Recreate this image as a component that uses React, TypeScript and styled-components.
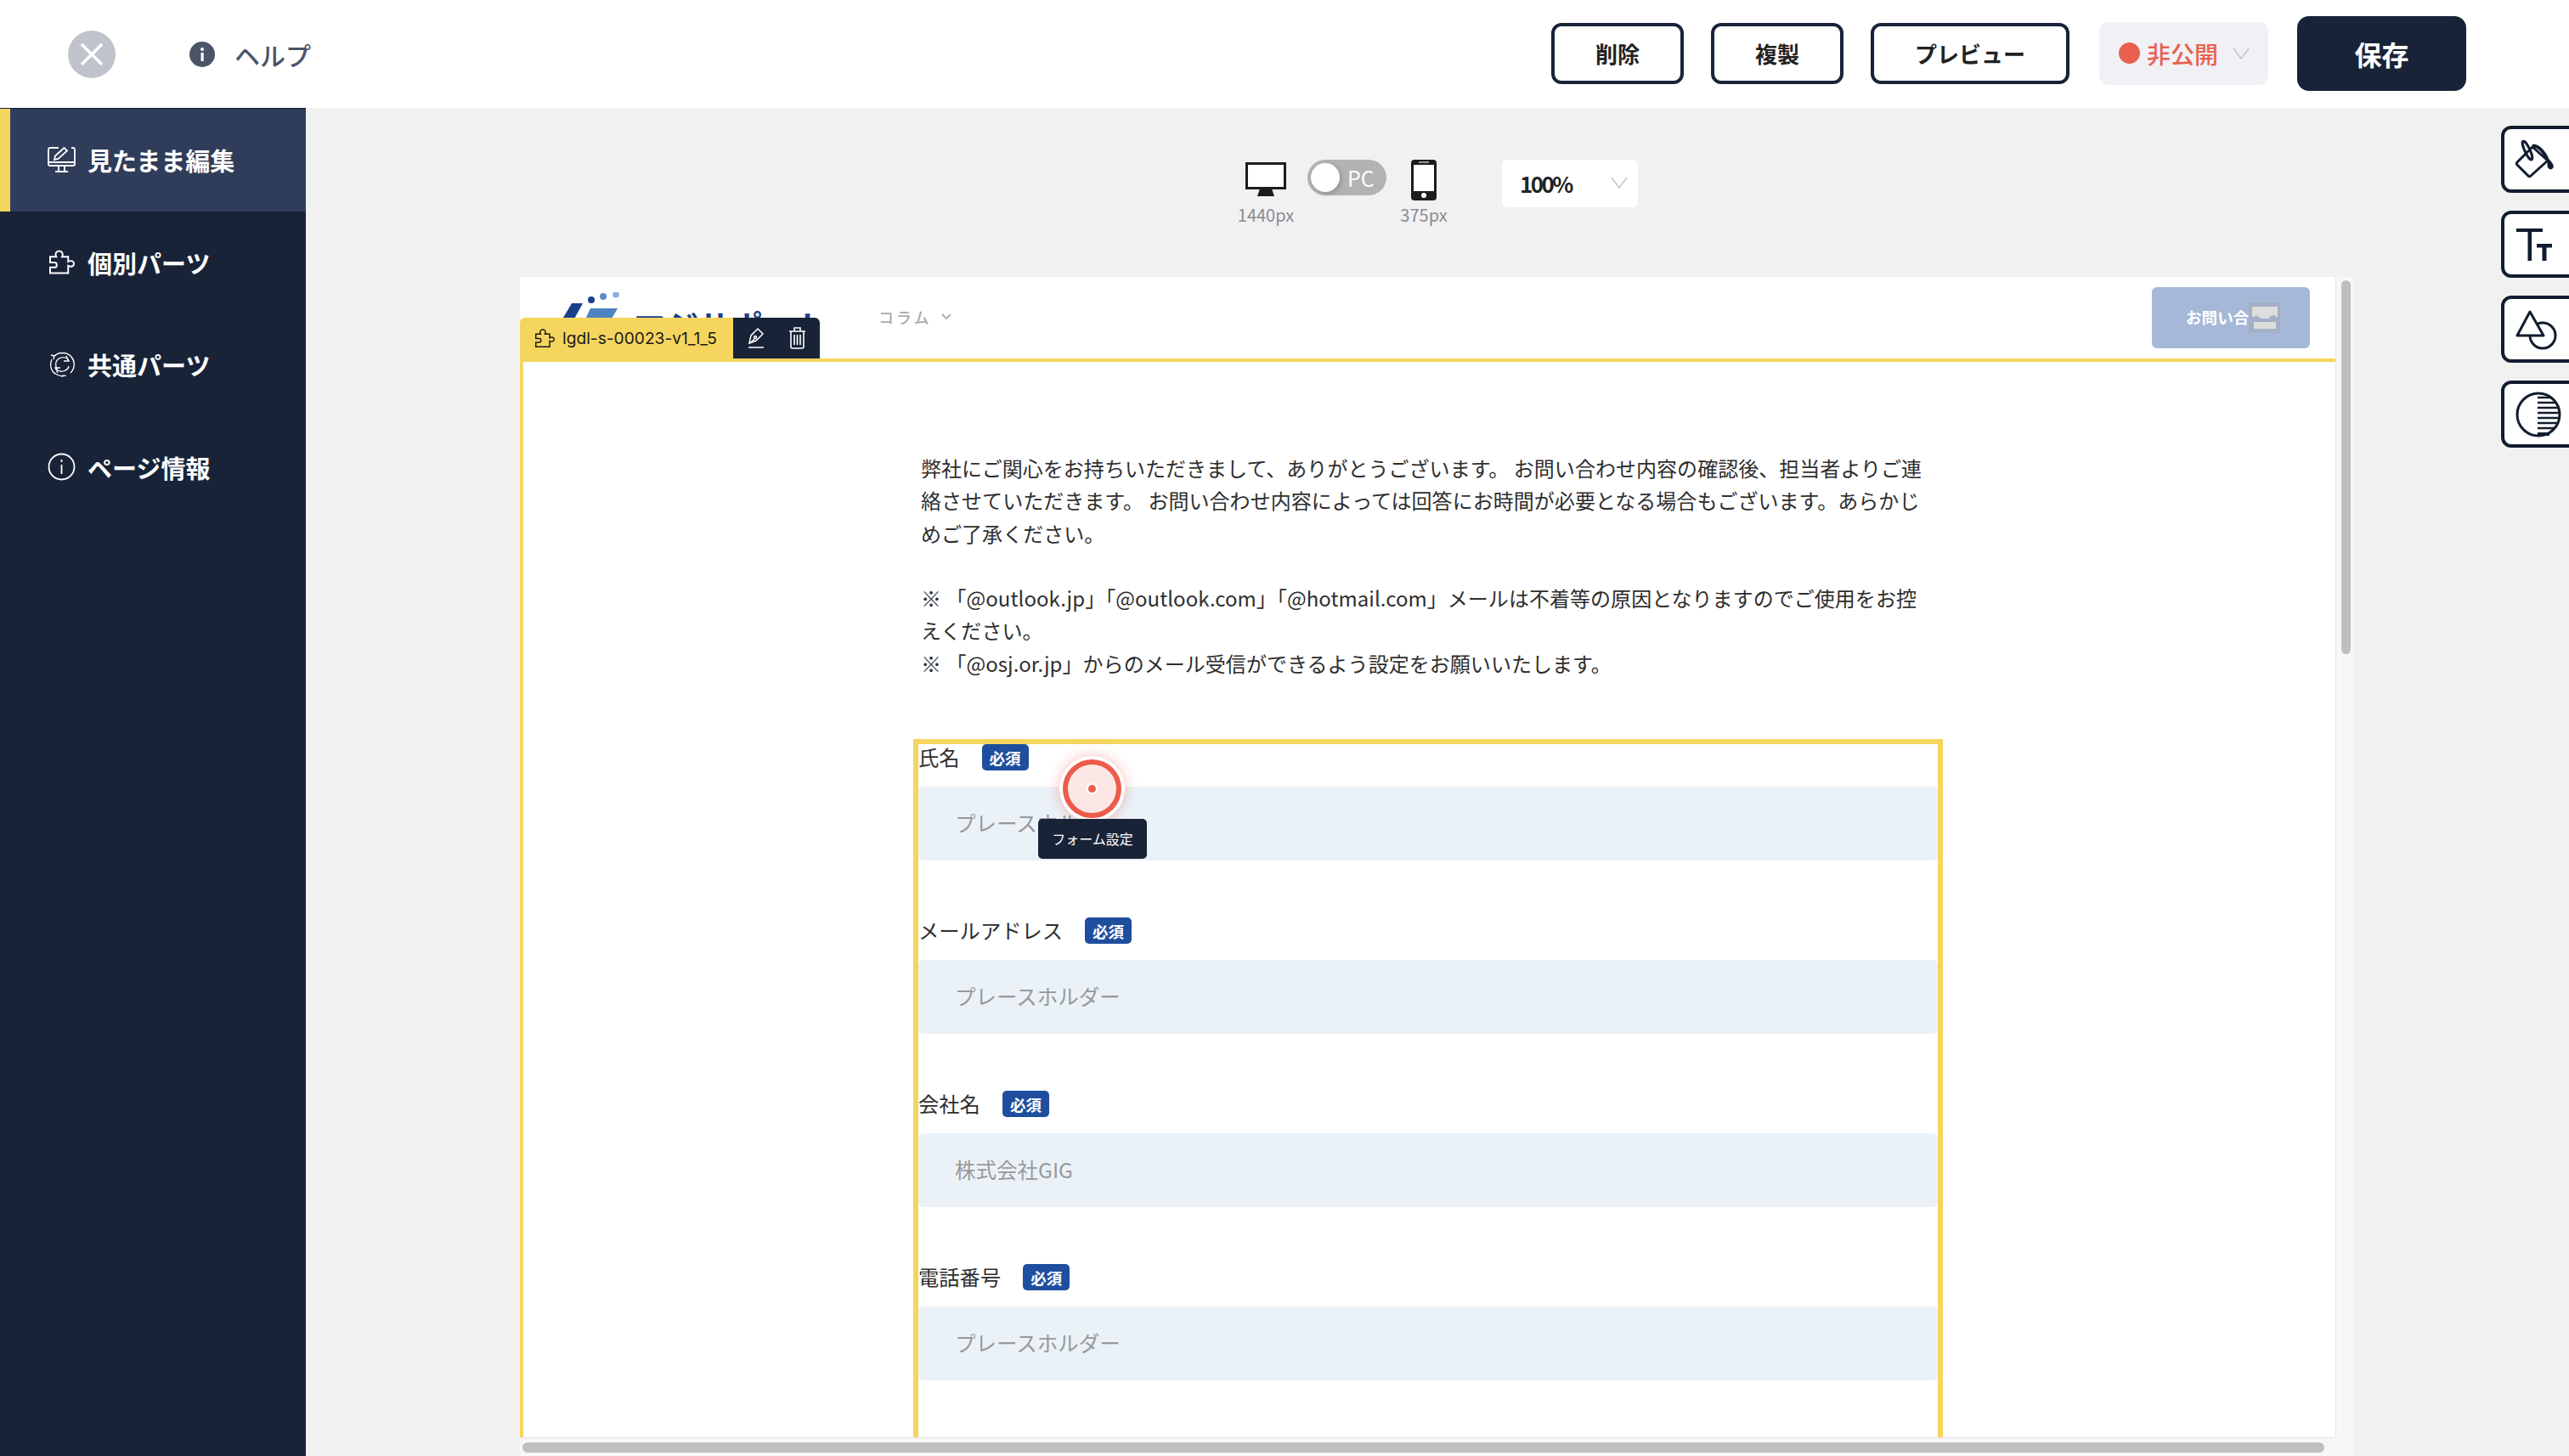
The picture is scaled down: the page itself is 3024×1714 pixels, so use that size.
import React from "react";
import styled, { createGlobalStyle } from "styled-components";

const GlobalStyle = createGlobalStyle`
  html, body { margin: 0; padding: 0; height: 100%; overflow: hidden; }
  body {
    font-family: "Noto Sans CJK JP", "Noto Sans", sans-serif;
    background: #f1f1f1;
    color: #222;
  }
  * { box-sizing: border-box; }
`;

const NAVY = "#182338";
const YELLOW = "#f5d55e";

const Shell = styled.div`
  width: 3024px;
  height: 1714px;
  display: flex;
  flex-direction: column;
  overflow: hidden;
`;

const Header = styled.header`
  height: 127px;
  flex: none;
  background: #fff;
  display: flex;
  align-items: center;
  padding: 0 121px 0 80px;
`;

const CloseButton = styled.button`
  width: 56px;
  height: 56px;
  border: 0;
  padding: 0;
  border-radius: 50%;
  background: #c0c3cb;
  display: flex;
  align-items: center;
  justify-content: center;
`;

const HelpLink = styled.a`
  margin-left: 87px;
  display: flex;
  align-items: center;
  gap: 23px;
  font-size: 30px;
  font-weight: 500;
  color: #4a5568;
`;

const HeaderActions = styled.div`
  margin-left: auto;
  margin-top: -2px;
  display: flex;
  align-items: center;
`;

const OutlineButton = styled.button<{ $width: number }>`
  width: ${(p) => p.$width}px;
  height: 72px;
  margin-right: 32px;
  background: #fff;
  border: 4px solid ${NAVY};
  border-radius: 12px;
  font: 700 26px "Noto Sans CJK JP", sans-serif;
  color: #222;
  padding: 0;
`;

const StatusSelect = styled.div`
  width: 199px;
  height: 74px;
  margin-left: 3px;
  background: #f1f1f5;
  border-radius: 10px;
  display: flex;
  align-items: center;
  padding-left: 23px;
  color: #e96050;
  font-size: 28px;
  font-weight: 500;
`;

const StatusDot = styled.span`
  width: 25px;
  height: 25px;
  border-radius: 50%;
  background: #e96050;
  margin-right: 8px;
`;

const StatusChevron = styled.span`
  margin-left: 17px;
  display: flex;
`;

const SaveButton = styled.button`
  width: 199px;
  height: 88px;
  margin-left: 34px;
  border: 0;
  border-radius: 14px;
  background: ${NAVY};
  color: #fff;
  font: 700 32px "Noto Sans CJK JP", sans-serif;
`;

const Workspace = styled.div`
  flex: 1;
  min-height: 0;
  display: flex;
`;

const Sidebar = styled.nav`
  width: 360px;
  flex: none;
  background: ${NAVY};
  padding-top: 1px;
`;

const NavItem = styled.a<{ $active?: boolean }>`
  height: 120.5px;
  display: flex;
  align-items: center;
  padding-left: ${(p) => (p.$active ? 44 : 56)}px;
  gap: 14px;
  color: #fff;
  font-size: 29px;
  font-weight: 700;
  background: ${(p) => (p.$active ? "#2f3d5a" : "transparent")};
  border-left: ${(p) => (p.$active ? `12px solid ${YELLOW}` : "0")};
`;

const NavIcon = styled.span`
  width: 33px;
  display: flex;
  justify-content: center;
`;

const Canvas = styled.main`
  flex: 1;
  min-width: 0;
  display: flex;
  flex-direction: column;
  padding: 61px 173px 0 252px;
`;

const DeviceBar = styled.div`
  height: 138px;
  flex: none;
  padding-left: 2px;
  display: flex;
  justify-content: center;
  align-items: flex-start;
`;

const DeviceOption = styled.div<{ $width: number }>`
  width: ${(p) => p.$width}px;
  height: 78px;
  display: flex;
  flex-direction: column;
  align-items: center;
  justify-content: space-between;
  font-size: 20px;
  line-height: 26px;
  color: #8a8a96;
`;

const DeviceToggle = styled.div`
  width: 93px;
  height: 42px;
  margin: 0 17px 0 16px;
  border-radius: 21px;
  background: #b3b3b3;
  display: flex;
  align-items: center;
  padding-left: 4px;
  color: #fff;
  font-size: 25px;
  gap: 9px;
`;

const ToggleKnob = styled.span`
  width: 34px;
  height: 34px;
  border-radius: 50%;
  background: #fff;
  box-shadow: 2px 2px 6px rgba(0, 0, 0, 0.2);
`;

const ZoomSelect = styled.div`
  width: 160px;
  height: 56px;
  margin-left: 65px;
  background: #fff;
  border-radius: 6px;
  display: flex;
  align-items: center;
  justify-content: space-between;
  padding: 0 12px 2px 21px;
  font-size: 26px;
  font-weight: 700;
  letter-spacing: -2.6px;
  color: #222;
`;

const Frame = styled.div`
  flex: 1;
  min-height: 0;
  display: grid;
  grid-template-columns: 1fr 21px;
  grid-template-rows: 1fr 21px;
  background: #f7f7f7;
`;

const Page = styled.div`
  position: relative;
  min-height: 0;
  min-width: 0;
  overflow: hidden;
  background: #fff;
  border-right: 1px solid #e4e4e4;
  border-bottom: 1px solid #e4e4e4;
`;

const ScrollTrackY = styled.div`
  padding: 4px 4px 0 6px;
`;

const ScrollThumbY = styled.div`
  width: 11px;
  height: 440px;
  border-radius: 6px;
  background: #bfbfbf;
`;

const ScrollTrackX = styled.div`
  padding: 5px 14px 0 3px;
`;

const ScrollThumbX = styled.div`
  height: 12px;
  border-radius: 6px;
  background: #bfbfbf;
`;

const SiteHeader = styled.div`
  height: 96px;
  display: flex;
  align-items: center;
  padding: 0 30px 0 47px;
  overflow: hidden;
`;

const Logo = styled.div`
  width: 305px;
  height: 96px;
  margin-right: 70px;
  flex: none;
  overflow: hidden;
  display: flex;
  align-items: flex-start;
  padding-top: 18px;
  gap: 17px;
`;

const LogoMark = styled.svg`
  flex: none;
`;

const LogoText = styled.span`
  flex: none;
  font-size: 38px;
  line-height: 50px;
  font-weight: 700;
  color: #1a3f8a;
  margin-top: 14px;
  white-space: nowrap;
`;

const SiteNav = styled.span`
  display: flex;
  align-items: center;
  gap: 12px;
  margin-top: -2px;
  font-size: 18px;
  font-weight: 500;
  letter-spacing: 3px;
  color: #aaa;
`;

const ContactButton = styled.div`
  position: relative;
  width: 186px;
  height: 72px;
  margin-left: auto;
  border-radius: 6px;
  background: #a6b8d8;
  color: #fff;
  font-size: 18.6px;
  font-weight: 700;
  display: flex;
  align-items: center;
  padding: 0 0 3px 40px;
  white-space: nowrap;
  overflow: hidden;
`;

const BrokenImage = styled.span`
  position: absolute;
  left: 114px;
  top: 18px;
  width: 37px;
  height: 36px;
  background: #a3afc5;
  display: flex;
  align-items: center;
  justify-content: center;
`;

const PartTab = styled.div`
  position: absolute;
  left: 0;
  top: 48px;
  height: 48px;
  display: flex;
`;

const PartName = styled.div`
  width: 251px;
  background: ${YELLOW};
  border-radius: 6px 0 0 0;
  display: flex;
  align-items: center;
  gap: 9px;
  padding-left: 18px;
  font: 400 19.2px Inter, sans-serif;
  color: #1a1a1a;
`;

const PartTools = styled.div`
  width: 102px;
  background: ${NAVY};
  border-radius: 0 6px 0 0;
  display: flex;
  align-items: center;
  gap: 28px;
  padding-left: 17px;
`;

const Section = styled.section`
  border-top: 4px solid ${YELLOW};
  border-left: 4px solid ${YELLOW};
  padding: 106px 0 0 459px;
`;

const Column = styled.div`
  width: 1212px;
`;

const Lead = styled.p`
  margin: 0 0 70px;
  padding-left: 9px;
  width: 1200px;
  font-size: 24px;
  line-height: 38.3px;
  letter-spacing: 0.04px;
  color: #2e2e2e;
`;

const FormBox = styled.div`
  position: relative;
  border: 6px solid ${YELLOW};
  border-bottom: 0;
`;

const Field = styled.div`
  height: 204px;
`;

const FieldLabel = styled.div`
  height: 31px;
  display: flex;
  align-items: center;
  font-size: 24.3px;
  color: #2e2e2e;
  margin-bottom: 19px;
`;

const LabelText = styled.span`
  margin-bottom: 3px;
`;

const RequiredBadge = styled.span`
  margin-left: 26px;
  width: 55px;
  height: 31px;
  border-radius: 5px;
  background: #1f4e9e;
  color: #fff;
  font-size: 18.5px;
  font-weight: 700;
  display: flex;
  align-items: center;
  justify-content: center;
`;

const InputBox = styled.div`
  height: 87px;
  border-radius: 6px;
  background: #eaf2f8;
  display: flex;
  align-items: center;
  padding: 0 0 3px 43px;
  font-size: 24.5px;
  color: #999;
`;

const Pin = styled.div`
  position: absolute;
  left: 166px;
  top: 14px;
  width: 77px;
  height: 77px;
  border-radius: 50%;
  background: #fff;
  padding: 4px;
  box-shadow: 0 0 16px rgba(238, 91, 74, 0.4);
`;

const PinRing = styled.div`
  width: 100%;
  height: 100%;
  border-radius: 50%;
  border: 6px solid #ee5b4a;
  background: rgba(238, 91, 74, 0.15);
  display: flex;
  align-items: center;
  justify-content: center;
`;

const PinDot = styled.span`
  width: 13px;
  height: 13px;
  border-radius: 50%;
  background: #ee5b4a;
  border: 2px solid #fff;
`;

const PinTooltip = styled.div`
  position: absolute;
  left: 141px;
  top: 88px;
  width: 128px;
  height: 47px;
  border-radius: 5px;
  background: ${NAVY};
  color: #fff;
  font-size: 16px;
  padding-bottom: 2px;
  display: flex;
  align-items: center;
  justify-content: center;
`;

const ToolRail = styled.aside`
  width: 80px;
  flex: none;
  overflow: hidden;
  padding-top: 21px;
  display: flex;
  flex-direction: column;
  gap: 21px;
`;

const ToolButton = styled.button`
  width: 110px;
  height: 79px;
  flex: none;
  padding: 0 0 0 13px;
  background: #fff;
  border: 4px solid #111d2e;
  border-radius: 12px;
  display: flex;
  align-items: center;
  color: #111d2e;
`;

const Chevron = ({ size = 20, color = "#c4c4c8" }: { size?: number; color?: string }) => (
  <svg width={size} height={size * 0.7} viewBox="0 0 20 14" fill="none" stroke={color} strokeWidth="1.5">
    <path d="M1 1l9 12 9-12" />
  </svg>
);

const fields = [
  { label: "氏名", placeholder: "プレースホルダー" },
  { label: "メールアドレス", placeholder: "プレースホルダー" },
  { label: "会社名", placeholder: "株式会社GIG" },
  { label: "電話番号", placeholder: "プレースホルダー" },
  { label: "住所", placeholder: "プレースホルダー" },
];

const PuzzleIcon = ({ color, size = 30 }: { color: string; size?: number }) => (
  <svg width={size} height={size} viewBox="0 0 31 30" fill="none" stroke={color} strokeWidth="2">
    <path d="M1 8h7.500C6.500 4.500 8.500 1 12 1s5.500 3.500 3.500 7H23v6c3.500-2 7-.5 7 2.500S26.500 21 23 19v9H1v-7h5.500c3.500 0 3.500-6 0-6H1z" />
  </svg>
);

const App: React.FC = () => {
  return (
    <Shell>
      <GlobalStyle />
      <Header>
        <CloseButton>
          <svg width="28" height="28" viewBox="0 0 28 28" stroke="#fff" strokeWidth="3.500">
            <path d="M2 2l24 24M26 2L2 26" />
          </svg>
        </CloseButton>
        <HelpLink>
          <svg width="30" height="30" viewBox="0 0 30 30">
            <circle cx="15" cy="15" r="15" fill="#4a5568" />
            <rect x="13.500" y="13" width="3.200" height="10" fill="#fff" />
            <circle cx="15" cy="9" r="2" fill="#fff" />
          </svg>
          ヘルプ
        </HelpLink>
        <HeaderActions>
          <OutlineButton $width={156}>削除</OutlineButton>
          <OutlineButton $width={156}>複製</OutlineButton>
          <OutlineButton $width={234}>プレビュー</OutlineButton>
          <StatusSelect>
            <StatusDot />
            非公開
            <StatusChevron>
              <Chevron />
            </StatusChevron>
          </StatusSelect>
          <SaveButton>保存</SaveButton>
        </HeaderActions>
      </Header>
      <Workspace>
        <Sidebar>
          <NavItem $active>
            <NavIcon>
              <svg width="33" height="30" viewBox="0 0 33 30" fill="none" stroke="#fff" strokeWidth="1.800">
                <path d="M13 1H3a2 2 0 0 0-2 2v17a2 2 0 0 0 2 2h27a2 2 0 0 0 2-2V3a2 2 0 0 0-2-2h-2" />
                <path d="M1 18h31M13 22v6M20 22v6M9 29h15" />
                <path d="M8 15l1-4.500L19.500 1l3.500 3.500L12.500 14z" />
              </svg>
            </NavIcon>
            見たまま編集
          </NavItem>
          <NavItem>
            <NavIcon>
              <PuzzleIcon color="#fff" />
            </NavIcon>
            個別パーツ
          </NavItem>
          <NavItem>
            <NavIcon>
              <svg width="30" height="30" viewBox="0 0 30 30" fill="none" stroke="#fff" strokeWidth="1.300">
                <path d="M5 6C10 0 21 0 26 6c5 6 4 14-1 19" />
                <path d="M3 9c-3 7-1 15 6 18 4 2 8 2 11 1" />
                <path d="M8 12c2-5 9-7 13-4l2 3M23 17c-1 5-8 8-13 5l-2-3M10 9c-3 3-3 8-1 11" />
                <path d="M20 5l3 6-6 0M10 25l-3-6 6 0M2 4l4 1-1 4M14 29l4-1" />
              </svg>
            </NavIcon>
            共通パーツ
          </NavItem>
          <NavItem>
            <NavIcon>
              <svg width="33" height="33" viewBox="0 0 33 33" fill="none" stroke="#fff" strokeWidth="1.800">
                <circle cx="16.500" cy="16.500" r="15" />
                <path d="M16.500 14v11M16.500 8v3" />
              </svg>
            </NavIcon>
            ページ情報
          </NavItem>
        </Sidebar>
        <Canvas>
          <DeviceBar>
            <DeviceOption $width={66}>
              <svg width="48" height="43" viewBox="0 0 48 43">
                <rect x="1.500" y="4.500" width="45" height="29" fill="#fff" stroke="#1c1c1c" strokeWidth="3" />
                <path d="M14 43l3-9h14l3 9z" fill="#1c1c1c" />
              </svg>
              1440px
            </DeviceOption>
            <DeviceToggle>
              <ToggleKnob />
              PC
            </DeviceToggle>
            <DeviceOption $width={54}>
              <svg width="30" height="48" viewBox="0 0 30 48">
                <rect width="30" height="48" rx="4" fill="#1c1c1c" />
                <rect x="3" y="6" width="24" height="31" fill="#fff" />
                <rect x="9" y="2" width="12" height="2" fill="#999" />
                <circle cx="15" cy="42" r="3" fill="#fff" />
              </svg>
              375px
            </DeviceOption>
            <ZoomSelect>
              100%
              <Chevron />
            </ZoomSelect>
          </DeviceBar>
          <Frame>
            <Page>
              <SiteHeader>
                <Logo>
                  <LogoMark width="70" height="60" viewBox="0 0 70 60">
                    <circle cx="37" cy="9" r="4" fill="#1a3f8a" />
                    <circle cx="51" cy="5" r="4" fill="#5b8cc9" />
                    <circle cx="66" cy="2.700" r="3.800" fill="#8cb0dd" />
                    <path d="M14 13h13L15 35H1z" fill="#1a3f8a" />
                    <path d="M36 19h32L58 36H28z" fill="#4f82c0" />
                  </LogoMark>
                  <LogoText>マジサポート</LogoText>
                </Logo>
                <SiteNav>
                  コラム
                  <svg width="12" height="8" viewBox="0 0 12 8" fill="none" stroke="#aaa" strokeWidth="1.800">
                    <path d="M1 1l5 5 5-5" />
                  </svg>
                </SiteNav>
                <ContactButton>
                  お問い合わせ
                  <BrokenImage>
                    <svg width="30" height="26" viewBox="0 0 30 26" fill="#ddd">
                      <path d="M0 0h30v13l-4 -3-4 1-3 3-9 0-3-3-4 0-3 2z" />
                      <path d="M2 18h26v8h-26z" />
                    </svg>
                  </BrokenImage>
                </ContactButton>
              </SiteHeader>
              <PartTab>
                <PartName>
                  <PuzzleIcon color="#1a1a1a" size={23} />
                  lgdl-s-00023-v1_1_5
                </PartName>
                <PartTools>
                  <svg width="20" height="26" viewBox="0 0 20 26" fill="none" stroke="#fff" strokeWidth="1.500">
                    <path d="M2 19l2-9 8-8 6 6-8 8z" />
                    <path d="M3 19l5-5" />
                    <circle cx="9" cy="12" r="1.500" />
                    <path d="M1 24h18" />
                  </svg>
                  <svg width="21" height="26" viewBox="0 0 21 26" fill="none" stroke="#fff" strokeWidth="1.600">
                    <path d="M1 5h19M7 5V1h7v4" />
                    <path d="M3 5v18a2 2 0 0 0 2 2h11a2 2 0 0 0 2-2V5" />
                    <path d="M7 9v12M10.500 9v12M14 9v12" />
                  </svg>
                </PartTools>
              </PartTab>
              <Section>
                <Column>
                  <Lead>
                    弊社にご関心をお持ちいただきまして、ありがとうございます。 お問い合わせ内容の確認後、担当者よりご連
                    <br />
                    絡させていただきます。 お問い合わせ内容によっては回答にお時間が必要となる場合もございます。あらかじ
                    <br />
                    めご了承ください。
                    <br />
                    <br />
                    ※ 「@outlook.jp」「@outlook.com」「@hotmail.com」メールは不着等の原因となりますのでご使用をお控
                    <br />
                    えください。
                    <br />
                    ※ 「@osj.or.jp」からのメール受信ができるよう設定をお願いいたします。
                  </Lead>
                  <FormBox>
                    {fields.map((field) => (
                      <Field key={field.label}>
                        <FieldLabel>
                          <LabelText>{field.label}</LabelText>
                          <RequiredBadge>必須</RequiredBadge>
                        </FieldLabel>
                        <InputBox>{field.placeholder}</InputBox>
                      </Field>
                    ))}
                    <Pin>
                      <PinRing>
                        <PinDot />
                      </PinRing>
                    </Pin>
                    <PinTooltip>フォーム設定</PinTooltip>
                  </FormBox>
                </Column>
              </Section>
            </Page>
            <ScrollTrackY>
              <ScrollThumbY />
            </ScrollTrackY>
            <ScrollTrackX>
              <ScrollThumbX />
            </ScrollTrackX>
          </Frame>
        </Canvas>
        <ToolRail>
          <ToolButton>
            <svg width="46" height="46" viewBox="0 0 46 46" fill="none" stroke="currentColor" strokeWidth="3" strokeLinejoin="round">
              <path d="M2 26L20 8l18 16-20 18a2 2 0 0 1-3 0L2 29a2 2 0 0 1 0-3z" />
              <path d="M20 7c5-2 14 6 18 17" strokeWidth="4" />
              <ellipse cx="14" cy="12" rx="3" ry="12" transform="rotate(-25 14 12)" />
              <path d="M39 24c2 2 5 6 4 8-2 2-4 0-4-2z" fill="currentColor" />
            </svg>
          </ToolButton>
          <ToolButton>
            <svg width="44" height="38" viewBox="0 0 44 38" fill="currentColor">
              <rect x="1" y="0" width="31" height="4" />
              <rect x="14.500" y="0" width="4.500" height="38" />
              <rect x="25" y="18" width="18" height="4.500" />
              <rect x="31.500" y="18" width="5" height="20" />
            </svg>
          </ToolButton>
          <ToolButton>
            <svg width="50" height="48" viewBox="0 0 50 48" fill="none" stroke="currentColor" strokeWidth="3" strokeLinejoin="round">
              <circle cx="32" cy="31" r="15" />
              <path d="M17 3L2 31h31z" fill="#fff" />
            </svg>
          </ToolButton>
          <ToolButton>
            <svg width="54" height="54" viewBox="0 0 54 54" fill="none" stroke="currentColor" strokeWidth="3">
              <circle cx="27" cy="27" r="25" />
              <path d="M26 7h15M26 13h22M26 19h25M26 25h26M26 31h26M26 37h24M26 43h20" strokeWidth="2.500" />
              <path d="M26 50h14" strokeWidth="4" />
            </svg>
          </ToolButton>
        </ToolRail>
      </Workspace>
    </Shell>
  );
};

export default App;
